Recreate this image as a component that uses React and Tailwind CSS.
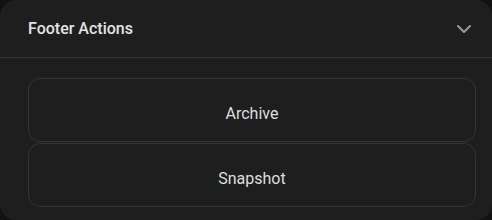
import { ChevronDown } from "lucide-react";

export default function App() {
  const actions = ["Archive", "Snapshot"];

  return (
    <div className="h-screen w-full bg-[#121212]" style={{ fontFamily: "Roboto, 'Noto Sans', sans-serif" }}>
      <div className="flex h-[220px] w-[492px] flex-col overflow-hidden rounded-2xl bg-[#1e1e1e]">
        {/* Header */}
        <div className="flex h-[58px] items-center justify-between border-b border-[#333333] pl-7 pr-4">
          <span className="text-base font-medium text-[#e4e4e4]">Footer Actions</span>
          <ChevronDown size={24} strokeWidth={2} className="text-[#9a9a9a]" />
        </div>

        {/* Buttons */}
        <div className="flex flex-col gap-px pl-7 pr-4 pt-5">
          {actions.map((a) => (
            <button
              key={a}
              className="flex h-16 w-full items-center justify-center rounded-xl border border-[#333333] pt-2 text-base text-[#dedede]"
            >
              {a}
            </button>
          ))}
        </div>
      </div>
    </div>
  );
}
